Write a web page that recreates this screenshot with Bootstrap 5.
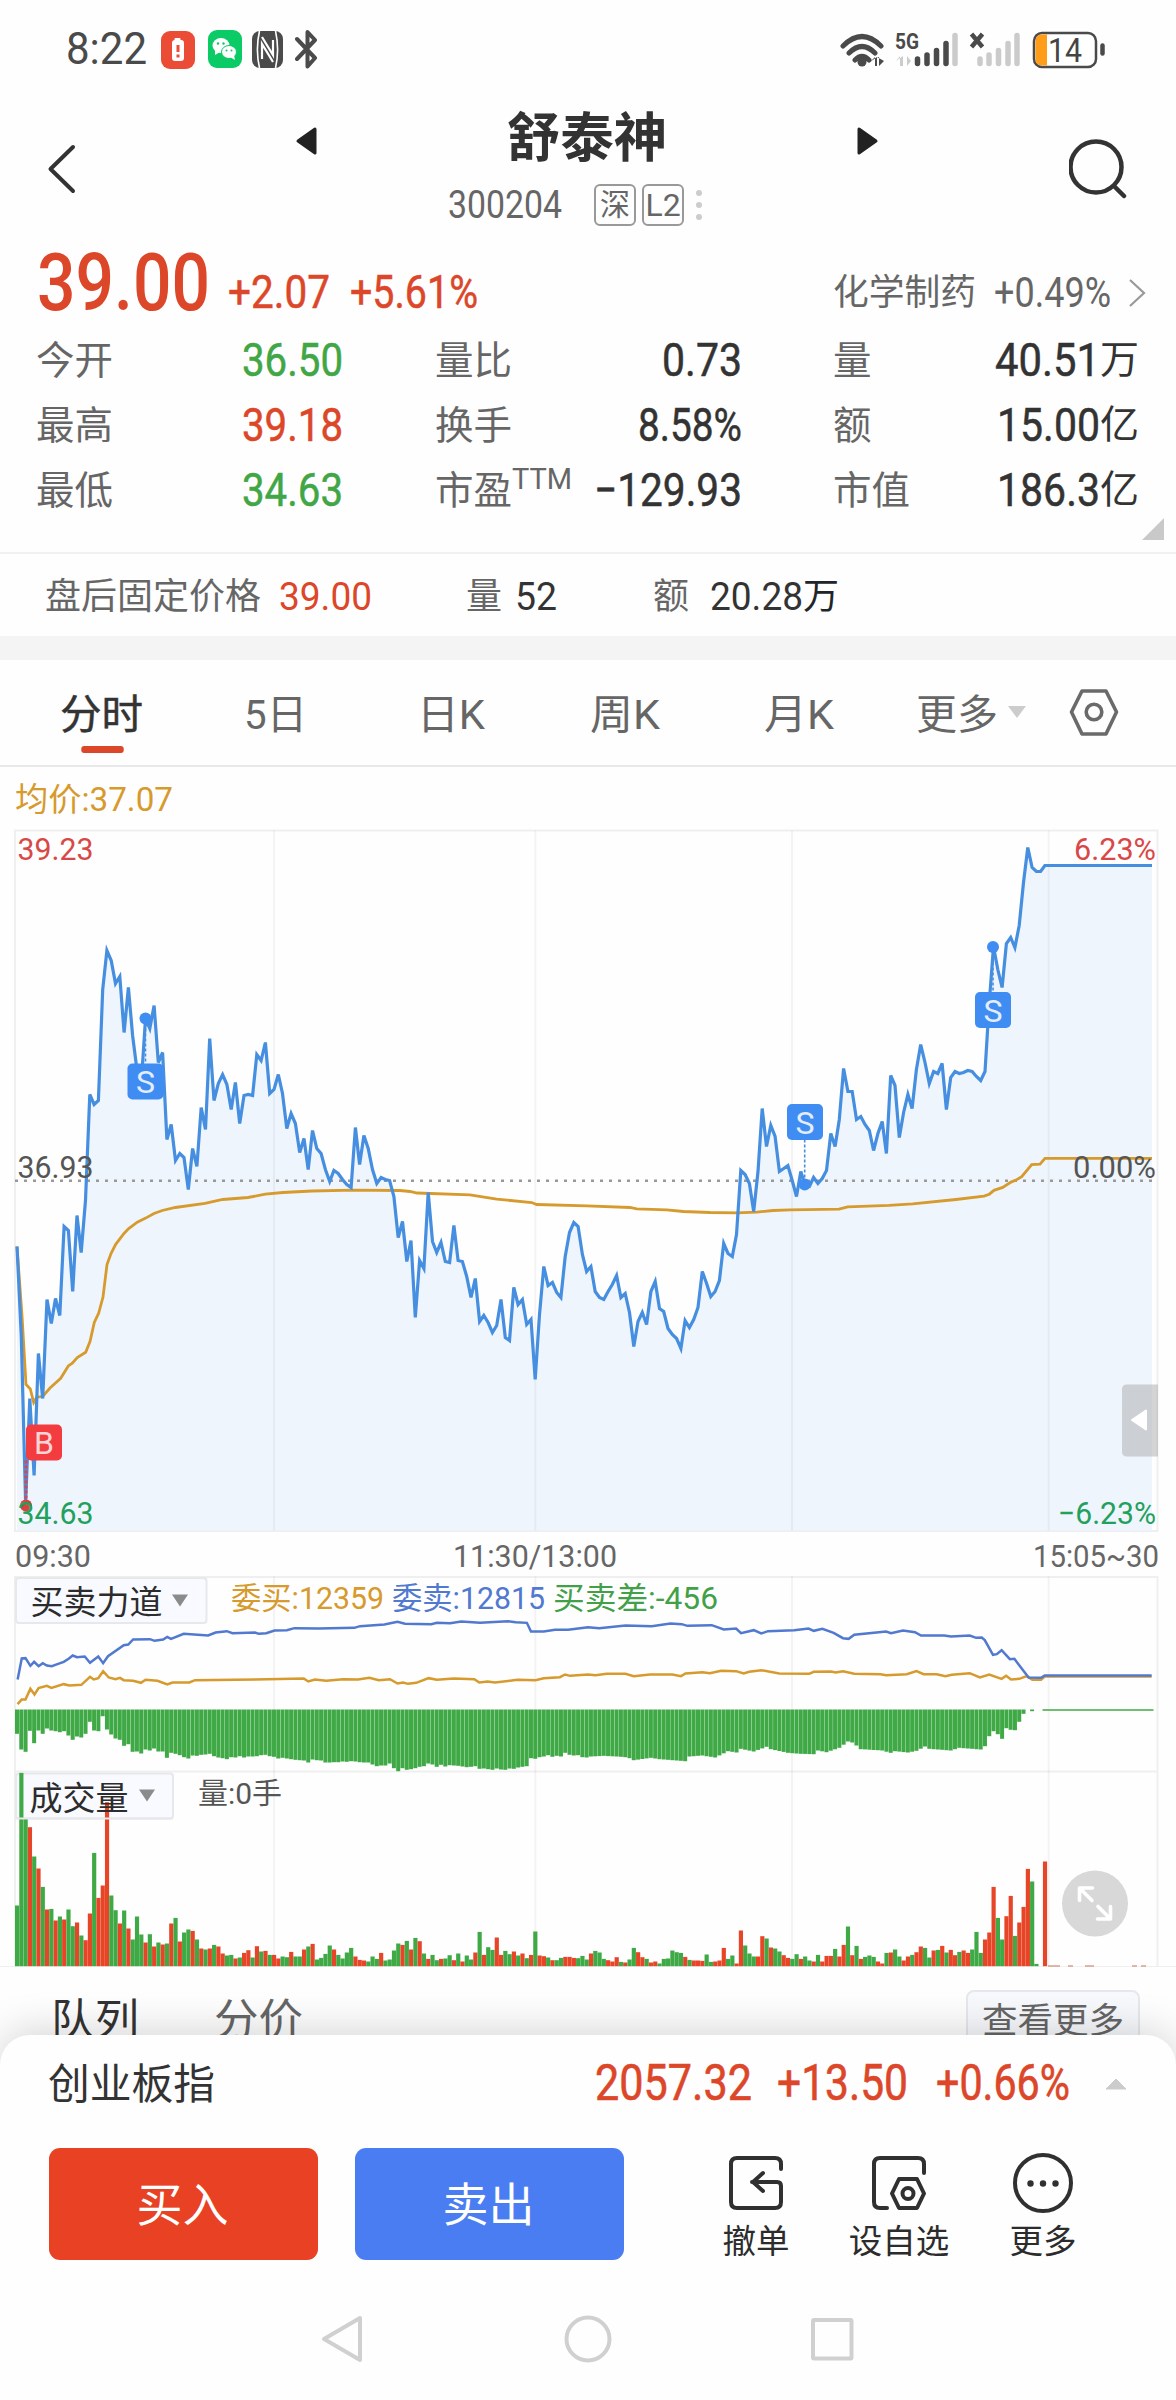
<!DOCTYPE html>
<html lang="zh-CN">
<head>
<meta charset="utf-8">
<meta name="viewport" content="width=device-width, initial-scale=1">
<title>舒泰神 300204</title>
<link href="https://cdn.jsdelivr.net/npm/bootstrap@5.3.0/dist/css/bootstrap.min.css" rel="stylesheet">
<style>
  :root { --up:#dc4629; --down:#41a646; --ink:#333; --soft:#666; }
  body { font-family:Roboto,"Noto Sans CJK SC",sans-serif; color:var(--ink); background:#fff; width:1176px; }
  .phone { width:1176px; height:2400px; overflow:hidden; background:#fefefe; }
  svg { display:block; flex:none; }
  .fit { display:inline-block; white-space:nowrap; transform-origin:left center; flex:none; }
  .up { color:var(--up); } .down { color:var(--down); } .soft { color:var(--soft); }
  .statusbar { height:98px; padding:0 74px 0 66px; color:#4a4a4a; }
  .clock { font-size:44.5px; line-height:100px; }
  .topbar { height:142px; padding:0 49px 0 47px; }
  .stock-name { font-size:53.5px; line-height:82px; font-weight:700; }
  .code { font-size:39px; line-height:48px; color:var(--soft); }
  .tagbox { width:42px; height:42px; border:2px solid #999; border-radius:6px; font-size:30px; line-height:38px; color:var(--soft); text-align:center; }
  .price-row { height:86px; padding:0 29px 0 37px; }
  .price { font-size:79px; line-height:86px; font-weight:500; }
  .change { font-size:46.5px; line-height:104px; -webkit-text-stroke:.5px; }
  .sector { font-size:42px; line-height:50px; color:var(--soft); }
  .sector .cn { font-size:36px; }
  .quote-grid { height:226px; padding-top:2px; }
  .quote-row { height:65.2px; line-height:65.2px; }
  .quote-row .k { font-size:38.5px; color:var(--soft); }
  .quote-row .v { font-size:46.5px; -webkit-text-stroke:.5px; }
  .quote-row .v .cn, .quote-row .unit { font-size:39px; -webkit-text-stroke:0; }
  .c1 { width:435px; padding:0 92px 0 36px; } .c2 { width:398px; padding-right:91px; } .c3 { width:343px; padding-right:37px; }
  .ttm { font-size:29px; line-height:30px; top:-15px; }
  .corner { right:12px; bottom:12px; }
  .fixed-row { height:84px; border-top:2px solid #f1f1f1; padding-left:45px; font-size:38px; line-height:86px; }
  .fixed-row .k { font-size:36px; color:var(--soft); }
  .band { height:24px; background:#f4f4f4; }
  .tabs { height:107px; border-bottom:2px solid #e8e8e8; font-size:41px; line-height:110px; color:var(--soft); padding-left:60px; }
  .tab-on { color:var(--ink); -webkit-text-stroke:.5px; }
  .tab-on::after { content:""; position:absolute; left:21px; top:86px; width:42px; height:7px; border-radius:3px; background:var(--up); }
  .below { height:68px; padding:0 36px 0 51px; }
  .below .t { font-size:43.5px; line-height:60px; padding-top:24px; }
  .more-btn { width:174px; height:60px; margin-top:23px; border:2px solid #e6e8ec; border-radius:8px; background:#f8f9fd; font-size:35.5px; line-height:58px; color:var(--soft); }
  .sheet { height:365px; background:#fefefe; border-radius:30px 30px 0 0; box-shadow:0 -4px 40px rgba(0,0,0,.17); }
  .index-row { height:113px; padding:0 49px 16px 48px; }
  .index-row .n { font-size:50px; line-height:97px; -webkit-text-stroke:.6px; }
  .actions { height:112px; padding-left:49px; }
  .trade { width:269px; height:112px; border:0; border-radius:11px; font-size:46px; color:#fff; padding:3px 14px 0 12px; }
  .trade:hover { color:#fff; }
  .buy { background:#e84124; } .sell { background:#4b7df2; }
  .tool { font-size:33.5px; line-height:48px; color:#2c2c2c; }
</style>
</head>
<body>
<div class="phone d-flex flex-column">

  <div class="statusbar d-flex align-items-center">
    <span class="clock fit" data-w="81">8:22</span>
    <svg style="margin:1px 13px 0 14px" width="34" height="38" viewBox="0 0 34 38"><rect width="34" height="38" rx="9" fill="#ea4c35"/><rect x="13.5" y="7" width="6" height="4" rx="1" fill="#fff"/><rect x="11" y="9" width="12" height="21" rx="3" fill="#fff"/><path d="M17 14v7M17 23.500v3" stroke="#ea4c35" stroke-width="3"/></svg>
    <svg style="margin-right:10px" width="34" height="38" viewBox="0 0 34 38"><rect width="34" height="38" rx="9" fill="#0acb66"/><ellipse cx="13" cy="15.500" rx="8.500" ry="7.500" fill="#fff"/><path d="M7 20v5l5-3z" fill="#fff"/><ellipse cx="21" cy="22" rx="7.500" ry="6.500" fill="#fff" stroke="#0acb66"/><path d="M22 27l5 3-1-5z" fill="#fff"/><g fill="#0acb66"><circle cx="10" cy="13.500" r="1.200"/><circle cx="15.500" cy="13.500" r="1.200"/><circle cx="18.500" cy="20.500" r="1"/><circle cx="23.500" cy="20.500" r="1"/></g></svg>
    <svg width="31" height="37" viewBox="0 0 31 37"><rect width="31" height="37" rx="8" fill="#4b4b4b"/><path d="M7.500 0c-2.500 11-2.500 26 0 37M23.500 0c2.500 11 2.500 26 0 37" fill="none" stroke="#fff" stroke-width="1.600"/><path d="M10 6l11 18V9M21 31L10 13v15" fill="none" stroke="#fff" stroke-width="2.200"/></svg>
    <svg style="margin-left:12px" width="23" height="40" viewBox="0 0 23 40"><path d="M2 10l18 19-7.500 8.500V3L20 11 2 30" fill="none" stroke="#4b4b4b" stroke-width="4" stroke-linecap="round" stroke-linejoin="round"/></svg>

    <svg class="ms-auto" width="268" height="50" viewBox="838 24 268 50" style="margin-right:-4px">
      <g fill="none" stroke="#4a4a4a" stroke-width="5" stroke-linecap="round"><path d="M843 47q19-19 38 0M849 54q13-13 26 0M855 61q7-7 14 0" transform="translate(0,-1)"/></g>
      <circle cx="862" cy="62" r="4.500" fill="#4a4a4a"/>
      <path d="M870 62l5-5v9h2v-9M884 61l-5 5v-9h-2" fill="#4a4a4a"/>
      <text x="895" y="49" font-size="22" font-weight="700" textLength="24" lengthAdjust="spacingAndGlyphs" fill="#4a4a4a">5G</text>
      <path d="M896 61l4-5v10h3V56M911 61l-4-5v10" fill="#ccc"/>
      <g stroke-width="5.500" stroke-linecap="round"><path d="M917.500 59v4.500M927 55v8.500M936.500 50.500v13M946 43.500v20" stroke="#4a4a4a"/><path d="M955 35.500v28M980 59v4.500M989 55v8.500M998.500 50.500v13M1008 43.500v20M1017 35.500v28" stroke="#cbcbcb"/></g>
      <path d="M971.500 34l11 13M982.500 34l-11 13" stroke="#4a4a4a" stroke-width="4.500"/>
      <rect x="1034" y="33" width="62" height="34" rx="8" fill="#fff" stroke="#4a4a4a" stroke-width="2.500"/><path d="M1042 34.500h5v31h-5q-6.500 0-6.500-6.500V41q0-6.500 6.500-6.500" fill="#ff9c1a"/>
      <text x="1048" y="61.500" font-size="33" textLength="34" lengthAdjust="spacingAndGlyphs" fill="#444">14</text>
      <path d="M1102.500 45.500v8" stroke="#4a4a4a" stroke-width="4.500" stroke-linecap="round"/>
    </svg>
  </div>

  <div class="topbar d-flex justify-content-between">
    <svg width="30" height="142" viewBox="0 98 30 142"><path d="M26 147L3.500 169 26 191" fill="none" stroke="#333" stroke-width="4" stroke-linecap="round" stroke-linejoin="round"/></svg>
    <div class="d-flex flex-column align-items-center" style="margin-left:28px">
      <div class="d-flex align-items-center justify-content-between" style="width:584px">
        <svg style="margin-top:4px" width="22" height="30" viewBox="0 0 22 30"><path d="M20 3v24L3 15z" fill="#222" stroke="#222" stroke-width="3" stroke-linejoin="round"/></svg>
        <div class="stock-name">舒泰神</div>
        <svg style="margin-top:4px" width="22" height="30" viewBox="0 0 22 30"><path d="M2 3v24l17-12z" fill="#222" stroke="#222" stroke-width="3" stroke-linejoin="round"/></svg>
      </div>
      <div class="d-flex align-items-center" style="padding-top:1px;margin-right:23px">
        <span class="code fit" data-w="114">300204</span>
        <span class="tagbox" style="margin-left:32px">深</span><span class="tagbox" style="margin-left:6px;font-size:32px">L2</span>
        <svg style="margin-left:11px" width="8" height="34" viewBox="0 0 8 34" fill="#ccc"><circle cx="4" cy="5" r="3"/><circle cx="4" cy="17" r="3"/><circle cx="4" cy="29" r="3"/></svg>
      </div>
    </div>
    <svg width="58" height="142" viewBox="1069 98 58 142"><g fill="none" stroke="#333" stroke-width="4.500" stroke-linecap="round"><circle cx="1096" cy="167" r="25.500"/><path d="M1114 186l10 10"/></g></svg>
  </div>

  <div class="price-row d-flex">
    <span class="price up fit" data-w="173">39.00</span>
    <span class="change up fit" data-w="102" style="margin-left:18px">+2.07</span>
    <span class="change up fit" data-w="128" style="margin-left:20px">+5.61%</span>
    <div class="sector ms-auto d-flex align-items-center" style="padding-top:20px">
      <span class="cn fit" data-w="143">化学制药</span><span class="fit" data-w="117" style="margin-left:18px">+0.49%</span>
      <svg style="margin-left:17px" width="19" height="30" viewBox="0 0 19 30"><path d="M2 2l14 13L2 28" fill="none" stroke="#999" stroke-width="2.200"/></svg>
    </div>
  </div>

  <div class="quote-grid position-relative">
    <div class="quote-row d-flex">
      <div class="c1 d-flex justify-content-between"><span class="k">今开</span><span class="v down fit" data-w="101">36.50</span></div>
      <div class="c2 d-flex justify-content-between"><span class="k">量比</span><span class="v fit" data-w="80">0.73</span></div>
      <div class="c3 d-flex"><span class="k me-auto">量</span><span class="v fit" data-w="105">40.51</span><span class="unit">万</span></div>
    </div>
    <div class="quote-row d-flex">
      <div class="c1 d-flex justify-content-between"><span class="k">最高</span><span class="v up fit" data-w="101">39.18</span></div>
      <div class="c2 d-flex justify-content-between"><span class="k">换手</span><span class="v fit" data-w="104">8.58%</span></div>
      <div class="c3 d-flex"><span class="k me-auto">额</span><span class="v fit" data-w="103">15.00</span><span class="unit">亿</span></div>
    </div>
    <div class="quote-row d-flex">
      <div class="c1 d-flex justify-content-between"><span class="k">最低</span><span class="v down fit" data-w="101">34.63</span></div>
      <div class="c2 d-flex justify-content-between"><span class="k">市盈<span class="ttm position-relative">TTM</span></span><span class="v fit" data-w="148">−129.93</span></div>
      <div class="c3 d-flex"><span class="k me-auto">市值</span><span class="v fit" data-w="103">186.3</span><span class="unit">亿</span></div>
    </div>
    <svg class="corner position-absolute" width="22" height="22"><path d="M22 0v22H0z" fill="#c9c9c9"/></svg>
  </div>

  <div class="fixed-row d-flex">
    <span class="k">盘后固定价格</span><span class="up fit" data-w="93" style="margin-left:18px">39.00</span>
    <span class="k" style="margin-left:94px">量</span><span class="fit" data-w="42" style="margin-left:13px">52</span>
    <span class="k" style="margin-left:96px">额</span><span class="fit" data-w="93" style="margin-left:21px">20.28</span><span class="k text-dark">万</span>
  </div>
  <div class="band"></div>

  <nav class="tabs d-flex">
    <span class="tab-on position-relative fit" data-w="83">分时</span>
    <span class="fit" data-w="63" style="margin-left:101px">5日</span>
    <span class="fit" data-w="68" style="margin-left:110px">日K</span>
    <span class="fit" data-w="70" style="margin-left:105px">周K</span>
    <span class="fit" data-w="70" style="margin-left:104px">月K</span>
    <span class="fit" data-w="82" style="margin-left:82px">更多</span>
    <svg style="margin:46px 0 0 10px" width="18" height="12"><path d="M0 0h18l-9 12z" fill="#ccc"/></svg>
    <svg style="margin:26px 0 0 42px" width="51" height="52" viewBox="1069 686 51 52"><path d="M1083 691h24l10.500 21L1107 734h-24l-10.500-22z" fill="none" stroke="#6a6a6a" stroke-width="3.600" stroke-linejoin="round"/><circle cx="1095" cy="712" r="7.800" fill="none" stroke="#6a6a6a" stroke-width="3.600"/></svg>
  </nav>

  <svg id="chart" width="1176" height="1200" viewBox="0 767.500 1176 1200" font-family="Roboto,'Noto Sans CJK SC',sans-serif" font-size="31">
    <g fill="none" stroke="#efefef" stroke-width="2">
      <path d="M15 831H1157.500V1531.500H15zM15 1968V1577.500H1157.500V1968M15 1772H1157.500M0 1967.500H1176"/>
    </g>
    <path id="area" fill="#eef5fd"/>
    <path d="M274 831V1531M535.300 831V1531M792 831V1531M1048.700 831V1531M274 1577V1967M535.300 1577V1967M792 1577V1967M1048.700 1577V1967" stroke="#000" stroke-opacity=".045" stroke-width="2"/>
    <path d="M15 1181.300H1152" stroke="#999" stroke-width="2.600" stroke-dasharray="3 6"/>
    <polyline fill="none" stroke="#d69a2d" stroke-width="2.800" points="17,1247 22,1316 26,1385 30.300,1389.400 33.700,1403 36.700,1397.700 42.700,1397 50,1388.500 60.700,1378.800 68.300,1366.400 72.300,1363.700 77.300,1358 85.700,1352.700 90,1342 94.300,1323 98.700,1313.600 103,1297.600 107,1265 111,1254 115.700,1244.800 124,1234 128.700,1229 137.300,1222.700 145.700,1218.600 154,1214 162.300,1211 175.300,1208 205,1203.900 222.700,1200 248,1198 265.300,1194.700 283,1193 312,1191.500 353,1190.600 400,1191 410,1192 417,1193.500 470,1195.300 496.700,1199.700 531.700,1203 536.700,1205 586.700,1206.300 630,1208 636.700,1209.300 666.700,1210.300 683.300,1212 710,1213 736.700,1213.300 756.700,1212.700 773,1211 790,1210.300 839,1209.700 847.700,1207.300 889,1205.800 912.700,1204.400 956,1200 984,1196.600 989.300,1194.700 994,1190.800 1002.700,1187.900 1011,1182.600 1016,1180.600 1021.700,1177.200 1031.700,1165 1040,1164.600 1045,1158.800 1152,1158.800"/>
    <path id="line" fill="none" stroke="#468ee0" stroke-width="3.200"/>
    <g stroke-width="1.600" stroke-dasharray="3 2" fill="none"><path d="M145.500 1019V1064M804.700 1140V1185M993 948V993" stroke="#468ee0"/><path d="M26 1461V1506" stroke="#e04444" stroke-width="3"/></g>
    <g fill="#3f8df2"><circle cx="145.500" cy="1019" r="6"/><circle cx="804.700" cy="1185" r="6"/><circle cx="993" cy="947.500" r="6"/>
      <rect x="127.500" y="1064" width="36" height="36" rx="5"/><rect x="787" y="1104.500" width="36" height="36" rx="5"/><rect x="975" y="992.500" width="36" height="36" rx="5"/></g>
    <circle cx="26" cy="1506" r="6" fill="#d9433f"/><rect x="26" y="1425" width="36" height="36" rx="5" fill="#f33c40"/>
    <g fill="#e3edfb" font-size="32" text-anchor="middle"><text x="145.500" y="1093.500">S</text><text x="805" y="1134">S</text><text x="993" y="1022">S</text><text x="44" y="1454.500" fill="#fbd5d6">B</text></g>
    <text x="15" y="811" font-size="32.500" textLength="158" lengthAdjust="spacingAndGlyphs" fill="#d69a2d">均价:37.07</text>
    <g lengthAdjust="spacingAndGlyphs">
      <text x="17.500" y="860" textLength="76" fill="#d94848">39.23</text><text x="17.500" y="1178" textLength="76" fill="#555">36.93</text><text x="17.500" y="1524" textLength="76" fill="#22a05c">34.63</text>
      <text x="1074" y="860" textLength="82" fill="#d94848">6.23%</text><text x="1073" y="1178" textLength="83" fill="#555">0.00%</text><text x="1058" y="1524" textLength="98" fill="#22a05c">−6.23%</text>
      <g fill="#666"><text x="15" y="1567" textLength="76">09:30</text><text x="453" y="1567" textLength="164">11:30/13:00</text><text x="1033" y="1567" textLength="126">15:05~30</text></g>
    </g>
    <path d="M1158 1385h-31q-5 0-5 5v62q0 5 5 5h31z" fill="#aaa" fill-opacity=".5"/><path d="M1146 1411v19l-14-9.500z" fill="#fff" stroke="#fff" stroke-width="2" stroke-linejoin="round"/>

    <g fill="#f8faff" stroke="#e7e8eb" stroke-width="2"><rect x="16" y="1578.500" width="190.500" height="45" rx="3"/><rect x="16" y="1774" width="157" height="45" rx="3"/></g>
    <g font-size="33" fill="#2c2c2c"><text x="30.500" y="1614">买卖力道</text></g>
    <path d="M172 1595h16l-8 12zM139 1790h16l-8 12z" fill="#8b8b8b"/>
    <g id="force" fill="#3fa946"></g>
    <path d="M1042.500 1710.500H1153.500" stroke="#3fa946" stroke-width="1.500"/>
    <g transform="translate(0,1560) scale(.375,.33333)" fill="none" stroke-width="2.500">
      <polyline vector-effect="non-scaling-stroke" stroke="#d69a2d" points="47,434 58,420 68,420 81,388 92,405 103,386 125,379 137,385 170,374 185,378 217,376 240,352 250,360 262,356 275,335 290,354 308,359 320,355 330,362 355,364 376,370 388,361 420,364 446,375 460,369 505,369 520,362 680,360 810,357 822,366 840,360 870,364 915,359 955,360 985,355 1010,362 1040,359 1060,372 1075,369 1088,373 1110,370 1143,356 1165,361 1210,357 1265,359 1278,369 1300,366 1320,369 1380,361 1428,362 1450,356 1493,353 1507,345 1520,349 1568,345 1588,347 1618,343 1668,343 1690,350 1733,345 1793,345 1816,350 1828,342 1873,338 1893,341 1923,334 1963,335 1983,342 1998,337 2030,332 2078,342 2158,343 2170,337 2216,336 2228,339 2248,335 2278,343 2348,344 2363,347 2418,344 2444,335 2463,344 2498,344 2521,350 2538,346 2586,341 2613,354 2638,345 2671,358 2683,349 2696,360 2718,358 2738,350 2753,361 2776,361 2786,351 3071,351"/>
      <polyline vector-effect="non-scaling-stroke" stroke="#5179cf" points="47,360 58,297 68,296 81,319 91,307 103,320 114,311 125,318 138,320 155,313 170,307 183,298 194,288 205,293 226,291 240,310 262,291 275,311 288,290 330,257 342,255 355,240 400,239 412,244 435,240 446,232 456,238 490,223 555,228 575,219 605,215 620,221 680,219 690,223 710,221 732,213 765,212 785,206 850,207 945,205 960,200 1025,195 1060,187 1080,193 1150,194 1165,190 1200,191 1230,186 1280,190 1355,185 1375,188 1405,190 1416,216 1450,216 1480,211 1515,211 1568,203 1598,206 1668,198 1738,200 1788,192 1818,194 1833,199 1898,197 1930,210 1963,207 1976,221 2010,212 2030,222 2048,215 2118,212 2156,207 2170,214 2193,208 2223,220 2248,236 2263,238 2278,226 2363,216 2376,221 2408,213 2440,218 2456,228 2518,228 2536,231 2586,228 2603,235 2618,234 2626,242 2648,286 2658,284 2671,272 2693,299 2705,298 2723,325 2743,354 2776,355 2786,348 3071,348"/>
    </g>
    <g font-size="31" lengthAdjust="spacingAndGlyphs"><text x="231" y="1609" textLength="153" fill="#d69a2d">委买:12359</text><text x="392" y="1609" textLength="153" fill="#5179d0">委卖:12815</text><text x="553" y="1609" textLength="165" fill="#41a048">买卖差:-456</text><text x="198" y="1804" textLength="84" font-size="29" fill="#555">量:0手</text></g>
    <g id="volume"></g>
    <path d="M15 1819H173" stroke="#e7e8eb" stroke-width="2"/>
    <text x="29.500" y="1810" font-size="33" fill="#2c2c2c">成交量</text>
    <path d="M1048 1966.500h12M1068 1966.500h5M1085 1966.500h9M1132 1966.500h5M1141 1966.500h5" stroke="#d9a090" stroke-width="1.500"/>
    <circle cx="1095" cy="1904" r="33" fill="#d8d8d8"/>
    <path d="M1092 1901l-12-12M1079.500 1901v-12.500h13M1098 1907l12 12M1110.500 1907v12.500h-13" fill="none" stroke="#fff" stroke-width="3.600" stroke-linecap="round" stroke-linejoin="round"/>
  </svg>

  <div class="below d-flex">
    <span class="t fit" data-w="88">队列</span><span class="t soft fit" data-w="89" style="margin-left:75px">分价</span>
    <div class="more-btn ms-auto text-center">查看更多</div>
  </div>

  <div class="sheet position-relative flex-shrink-0">
    <div class="index-row d-flex align-items-center">
      <span class="fit" data-w="167" style="font-size:42px;padding-top:2px">创业板指</span>
      <span class="n up fit ms-auto" data-w="157">2057.32</span><span class="n up fit" data-w="131" style="margin-left:25px">+13.50</span><span class="n up fit" data-w="134" style="margin-left:28px">+0.66%</span>
      <svg style="margin-left:35px" width="22" height="13"><path d="M11 2L21 12H1z" fill="#ccc" stroke="#ccc" stroke-linejoin="round"/></svg>
    </div>
    <div class="actions d-flex">
      <button class="btn trade buy">买入</button><button class="btn trade sell" style="margin-left:37px">卖出</button>
      <div class="d-flex text-center" style="margin-left:94px">
        <div class="tool d-flex flex-column align-items-center" style="width:76px"><svg width="62" height="70" viewBox="725 2148 62 70"><path d="M781 2169v-5q0-6-6-6h-38q-6 0-6 6v38q0 6 6 6h38q6 0 6-6v-16q0-4-4-4h-25M763 2173l-10 9 10 9" fill="none" stroke="#303030" stroke-width="4" stroke-linecap="round" stroke-linejoin="round"/></svg>撤单</div>
        <div class="tool d-flex flex-column align-items-center" style="width:110px;margin-left:50px"><svg width="62" height="70" viewBox="868 2148 62 70"><path d="M924 2173v-9q0-6-6-6h-38q-6 0-6 6v38q0 6 6 6h7M899 2179h18l7 14.500-7 14.500h-18l-7-14.500z" fill="none" stroke="#303030" stroke-width="4" stroke-linecap="round" stroke-linejoin="round"/><circle cx="908" cy="2193.500" r="5.500" fill="none" stroke="#303030" stroke-width="4"/></svg>设自选</div>
        <div class="tool d-flex flex-column align-items-center" style="width:76px;margin-left:51px"><svg width="62" height="70" viewBox="1012 2148 62 70"><circle cx="1043" cy="2183" r="28" fill="none" stroke="#303030" stroke-width="4"/><g fill="#303030"><circle cx="1030.500" cy="2183.500" r="3.200"/><circle cx="1043" cy="2183.500" r="3.200"/><circle cx="1055.500" cy="2183.500" r="3.200"/></g></svg>更多</div>
      </div>
    </div>
    <svg width="1176" height="140" viewBox="0 2260 1176 140"><g fill="none" stroke="#d0d0d0" stroke-width="4" stroke-linejoin="round"><path d="M360 2318v42l-36-21z"/><circle cx="588" cy="2339" r="21.500"/><rect x="813" y="2320" width="38.500" height="38.500" rx="1"/></g></svg>
  </div>
</div>

<script src="https://cdn.jsdelivr.net/npm/bootstrap@5.3.0/dist/js/bootstrap.bundle.min.js"></script>
<script>
document.querySelectorAll('.fit').forEach(e => {
  const n = e.getBoundingClientRect().width, w = +e.dataset.w;
  e.style.transform = `scaleX(${w / n})`;
  e.style.marginRight = `${w - n}px`;
});
document.querySelectorAll('#chart g[lengthAdjust] text').forEach(t => t.setAttribute('lengthAdjust', 'spacingAndGlyphs'));

const STEP = 4.283;
// One value per trading minute
const price = [1247,1337,1503,1399,1476,1354,1399,1300,1324,1299,1316,1227,1231,1292,1216,1253,1201,1095,1105,1101,990,951,961,984,977,1033,988,1036,1070,1085,1019,1029,1006,1063,1053,1140,1125,1161,1154,1158,1190,1149,1167,1108,1130,1039,1101,1084,1075,1085,1110,1083,1124,1096,1095,1096,1055,1061,1043,1094,1090,1075,1094,1129,1114,1124,1153,1139,1170,1131,1149,1154,1170,1182,1171,1174,1180,1185,1188,1128,1165,1136,1149,1170,1184,1178,1180,1181,1197,1238,1222,1262,1241,1318,1261,1269,1193,1242,1253,1243,1262,1263,1226,1261,1262,1277,1298,1279,1322,1316,1323,1333,1326,1300,1338,1341,1288,1305,1300,1325,1320,1380,1315,1267,1286,1283,1293,1298,1257,1233,1223,1227,1255,1272,1267,1292,1298,1300,1292,1285,1276,1298,1294,1313,1347,1322,1313,1325,1292,1282,1309,1312,1329,1335,1339,1349,1321,1328,1320,1308,1272,1284,1297,1292,1281,1244,1254,1257,1235,1171,1175,1184,1212,1172,1109,1147,1126,1137,1172,1169,1166,1181,1197,1172,1186,1187,1178,1184,1179,1171,1134,1147,1120,1069,1092,1092,1120,1117,1125,1131,1151,1134,1122,1154,1076,1086,1138,1113,1095,1109,1070,1045,1063,1084,1072,1074,1064,1110,1078,1072,1074,1073,1071,1072,1077,1081,1072,1004,947,970,988,944,938,948,926,883,848,868,872,872,866];
const pts = price.map((y, i) => `${(17 + i * STEP).toFixed(1)},${y}`).join(' ') + ' 1152,866';
document.getElementById('line').setAttribute('d', 'M' + pts);
document.getElementById('area').setAttribute('d', 'M' + pts + ' V1531H17Z');

const bar = (i, top, h, extra, gap) => `<rect x="${(15 + i * STEP).toFixed(2)}" y="${top}" width="${(STEP - gap).toFixed(2)}" height="${h.toFixed(1)}"${extra}/>`;

// Bid/ask imbalance, [minute, depth] with linear runs between
const depth = [73,120,127,64,101,63,73,57,63,65,68,65,78,91,81,84,73,37,63,65,20,60,75,87,91,109,104,127,126,132,120,123,117,126,126,145,130,133,137,143,147,138,139,136,135,133,140,144,146,149,143,144,140,144,141,141,140,137,136,140,142,147,145,147,149,151,152,153,159,150,152,153,159,159,158,158,156,157,155,156,158,159,159,165,170,168,168,162,176,185,176,181,179,176,172,170,162,165,172,166,171,167,168,169,171,173,172,170,178,177,179,181,177,180,181,177,178,174,172,170,146,148,143,141,137,142,139,141,130,136,138,137,143,144];
const tail = [[133,144],[134,141],[137,139],[140,141],[142,143],[143,146],[144,152],[148,145],[150,149],[155,154],[156,155],[157,141],[160,138],[163,144],[166,125],[168,129],[169,118],[172,126],[175,112],[176,119],[180,130],[183,133],[186,134],[187,123],[189,128],[192,115],[194,96],[195,99],[196,108],[197,119],[202,123],[204,130],[205,125],[208,129],[210,124],[212,111],[213,118],[218,123],[220,115],[225,120],[226,110],[227,80],[228,65],[229,74],[230,88],[231,56],[232,61],[233,62],[234,37],[235,13],[236,0],[237,5]];
for (let k = 1; k < tail.length; k++) {
  const [a, u] = tail[k - 1], [b, v] = tail[k];
  for (let i = a + 1; i <= b; i++) depth[i] = u + (v - u) * (i - a) / (b - a);
}
document.getElementById('force').innerHTML = depth.map((d, i) => bar(i, 1710, d / 3, '', .28)).join('');

// Traded volume: colour and bar height
const vol = 'G182 G580 G442 R417 G329 R293 G238 R170 G172 R137 G149 R140 G170 G120 R131 G92 R78 R158 G340 R205 R242 R492 G212 G168 R128 G167 R113 G80 G149 G95 R71 G96 R59 G71 R65 G68 R128 G145 R74 G101 G110 R106 G80 R53 G50 R53 G64 R59 R38 G32 G34 R23 G26 R40 R48 G26 R60 G44 R46 G34 R34 R23 G29 G27 R43 G29 G29 R50 G59 R67 G20 G25 G37 G62 R50 G34 G23 G41 G55 R29 R19 R17 G14 G29 G22 R40 G17 G20 G47 G68 R64 G76 R50 G85 R75 G38 R22 G34 G18 R22 G23 G33 R18 G38 R14 G32 G20 R41 G103 R34 G57 G49 R86 R34 G46 G36 R44 G32 R38 G24 R34 G104 R32 R30 G26 R18 G18 G25 R28 R28 R25 G24 G31 G20 R38 G46 G41 G22 R18 R14 R27 G13 R11 G20 G55 R42 R27 G22 R11 R14 G8 G22 G23 G47 G42 G40 R28 G19 R17 R17 R16 G35 G13 R14 R17 R55 G22 G32 R8 R107 G62 G38 G29 R29 R90 G83 R56 G53 G44 R33 R25 G22 G36 R22 G29 G17 R14 G34 R14 R31 R31 G52 R29 R64 G119 R33 G61 R22 G28 G32 G28 R14 R8 G40 R41 G50 G29 R17 R29 G34 R42 R59 G55 G26 R47 G49 R61 G41 R49 R33 G43 R47 R40 G50 G103 G40 R80 R101 R238 G145 G80 R150 R211 G91 R131 R178 R292 G254 G7 G0 R314'.split(' ');
document.getElementById('volume').innerHTML = vol.map((s, i) => {
  const h = +s.slice(1) / 3;
  return bar(i, (1966.7 - h).toFixed(1), h, ` fill="${s[0] === 'R' ? '#e64627' : '#3fa946'}"`, .1);
}).join('');
</script>
</body>
</html>
